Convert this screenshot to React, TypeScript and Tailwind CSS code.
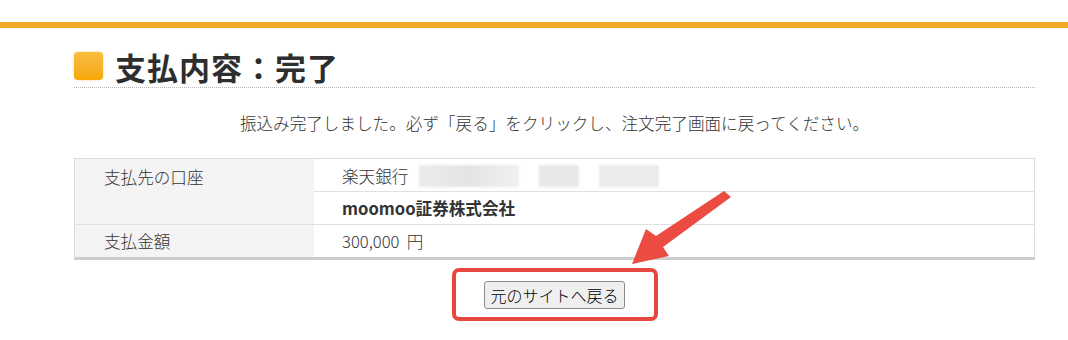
import React from 'react';

const font = { fontFamily: '"Noto Sans CJK JP", "Noto Sans", sans-serif' };

const App: React.FC = () => {
  return (
    <div className="relative w-[1068px] h-[340px] bg-white text-[#333] font-light overflow-hidden" style={font}>
      <div className="h-[22px]" />
      <div className="h-[6px] bg-[#efa927]" />

      <div className="ml-[74px] w-[961px]">
        {/* title */}
        <div className="mt-[22px] h-[38px] flex items-start gap-[12px] border-b border-dotted border-[#b5b5b5]">
          <div className="mt-[2px] w-[29px] h-[28px] rounded-[4px] bg-gradient-to-b from-[#f9bd3e] to-[#f6a800] shadow-[0_0_2px_rgba(246,168,0,0.6)]" />
          <h1 className="text-[31px] font-bold leading-[34px] text-[#2e2e2e] tracking-[1px]">支払内容：完了</h1>
        </div>

        <p className="mt-[23px] text-center text-[16.6px] leading-[24px] text-[#333]">
          振込み完了しました。必ず「戻る」をクリックし、注文完了画面に戻ってください。
        </p>

        {/* table */}
        <div className="mt-[23px] grid grid-cols-[239px_1fr] border border-[#dcdcdc] border-b-[3px] border-b-[#cdcdcd] text-[16.6px]">
          <div className="row-span-2 bg-[#f4f4f4] pl-[29px] pt-[6px] leading-[24px]">支払先の口座</div>
          <div className="h-[33px] flex items-center pt-[2px] pl-[28px] border-b border-[#e0e0e0]">
            <span>楽天銀行</span>
            <div className="ml-[11px] flex items-center gap-[20px] blur-[1px]">
              <div className="w-[100px] h-[22px] bg-gradient-to-r from-[#ececec] via-[#e4e4e4] to-[#f0f0f0]" />
              <div className="w-[40px] h-[22px] bg-[#e8e8e8]" />
              <div className="w-[60px] h-[22px] bg-[#ebebeb]" />
            </div>
          </div>
          <div className="h-[32px] flex items-center pl-[28px] font-bold">moomoo証券株式会社</div>
          <div className="h-[33px] flex items-center pl-[29px] bg-[#f4f4f4] border-t border-[#e0e0e0]">支払金額</div>
          <div className="h-[33px] flex items-center pl-[28px] border-t border-[#e0e0e0]">300,000&nbsp;&nbsp;円</div>
        </div>

        <div className="mt-[8px] flex justify-center">
          <div className="w-[206px] h-[53px] flex items-center justify-center border-[4px] border-[#e8473f] rounded-[7px]">
            <button className="h-[28px] px-[5px] bg-[#efefef] border border-[#8a8a8a] rounded-[3px] text-[16px] leading-[20px] text-black">
              元のサイトへ戻る
            </button>
          </div>
        </div>
      </div>

      {/* annotation arrow */}
      <svg className="absolute left-0 top-0" width="1068" height="340" viewBox="0 0 1068 340">
        <polygon
          points="724,191 731,197 663,247 669,256 632,264 646,229 656,236"
          fill="#ec4b41"
          strokeLinejoin="round"
        />
      </svg>
    </div>
  );
};

export default App;
